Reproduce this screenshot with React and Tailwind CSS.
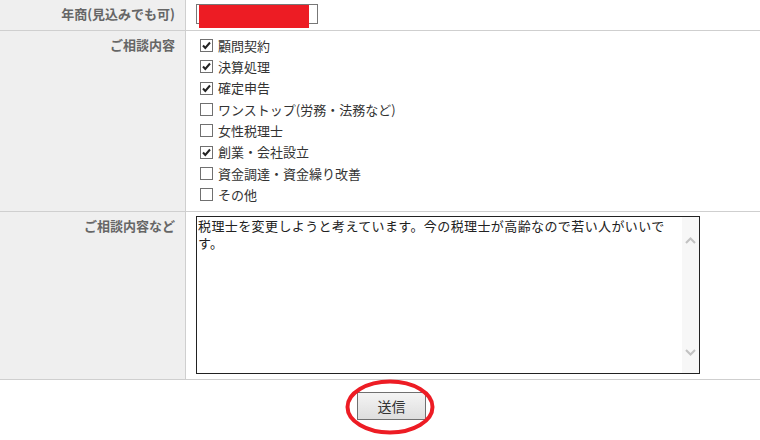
import React from 'react';

const font = { fontFamily: '"Noto Sans CJK JP", "MS PGothic", sans-serif' };

const items = [
  ['顧問契約', true],
  ['決算処理', true],
  ['確定申告', true],
  ['ワンストップ(労務・法務など)', false],
  ['女性税理士', false],
  ['創業・会社設立', true],
  ['資金調達・資金繰り改善', false],
  ['その他', false],
];

function Box({ checked }) {
  return (
    <svg width="13" height="13" viewBox="0 0 13 13" className="shrink-0">
      <rect x="0.5" y="0.5" width="12" height="12" fill="#fff" stroke="#707070" />
      {checked && <path d="M3 6.5 L5.3 9 L10 3.5" fill="none" stroke="#222" strokeWidth="2" />}
    </svg>
  );
}

function Label({ children }) {
  return (
    <div className="w-[186px] shrink-0 bg-[#efefef] border-r border-[#cfcfcf] pr-[10px] pt-[6px] text-right text-[13px] leading-[16px] font-bold text-[#666]">
      {children}
    </div>
  );
}

export default function App() {
  return (
    <div className="w-[760px] h-[440px] bg-white overflow-hidden" style={font}>
      <div className="flex h-[31px] border-b border-[#cfcfcf]">
        <Label>年商(見込みでも可)</Label>
        <div className="relative pl-[10px] pt-[4px]">
          <div className="w-[122px] h-[20px] border border-[#777] bg-white" />
          <div className="absolute left-[13px] top-[5px] w-[110px] h-[23px] bg-[#ed1c24]" />
        </div>
      </div>

      <div className="flex h-[181px] border-b border-[#cfcfcf]">
        <Label>ご相談内容</Label>
        <div className="pl-[14px] pt-[4px]">
          {items.map(([t, c]) => (
            <div key={t} className="flex items-center gap-[5px] h-[21.3px] text-[13px] text-[#333]">
              <Box checked={c} />
              <span>{t}</span>
            </div>
          ))}
        </div>
      </div>

      <div className="flex h-[168px] border-b border-[#cfcfcf]">
        <Label>ご相談内容など</Label>
        <div className="pl-[10px] pt-[4px]">
          <div className="flex w-[504px] h-[158px] border border-[#222] bg-white">
            <div className="flex-1 pl-[1px] text-[13px] leading-[17px] tracking-[0.4px] text-[#222] whitespace-nowrap">
              <div>税理士を変更しようと考えています。今の税理士が高齢なので若い人がいいで</div>
              <div>す。</div>
            </div>
            <div className="w-[17px] bg-[#f7f7f7] flex flex-col items-center justify-between pt-[20px] pb-[17px]">
              <svg width="11" height="7" viewBox="0 0 11 7">
                <path d="M1 6 L5.5 1.5 L10 6" fill="none" stroke="#c2c2c2" strokeWidth="2" />
              </svg>
              <svg width="11" height="7" viewBox="0 0 11 7">
                <path d="M1 1 L5.5 5.5 L10 1" fill="none" stroke="#c2c2c2" strokeWidth="2" />
              </svg>
            </div>
          </div>
        </div>
      </div>

      <div className="flex justify-center pl-[23px] pt-[12px]">
        <div className="relative">
          <button className="w-[69px] h-[28px] border border-[#707070] bg-gradient-to-b from-[#f4f4f4] to-[#dedede] text-[14px] text-[#333]">
            送信
          </button>
          <svg width="92" height="58" viewBox="0 0 92 58" className="absolute left-[-13px] top-[-14px] pointer-events-none">
            <ellipse cx="46" cy="29" rx="42.5" ry="25.5" fill="none" stroke="#ed1c24" strokeWidth="4" />
          </svg>
        </div>
      </div>
    </div>
  );
}
